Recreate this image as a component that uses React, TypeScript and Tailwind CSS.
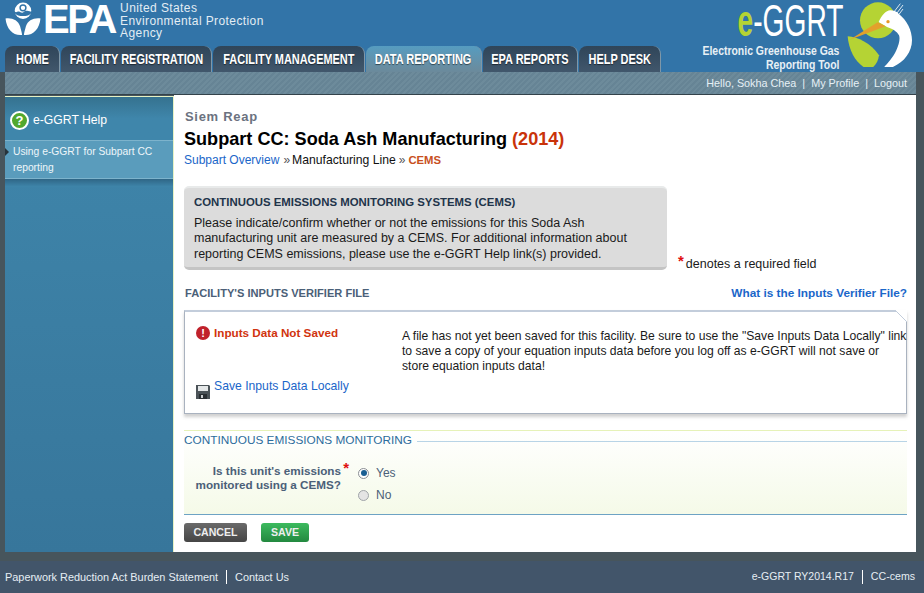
const tabs = [
  { label: "HOME", width: "w-[55px]" },
  { label: "FACILITY REGISTRATION", width: "w-[151px]" },
  { label: "FACILITY MANAGEMENT", width: "w-[152px]" },
  { label: "DATA REPORTING", width: "w-[116px]", active: true },
  { label: "EPA REPORTS", width: "w-[95px]" },
  { label: "HELP DESK", width: "w-[82px]" },
];

const EpaMark = () => (
  <svg width="36" height="34" viewBox="0 0 36 35" className="shrink-0">
    <circle cx="18" cy="9" r="8.5" fill="#fff" />
    <circle cx="18" cy="6" r="3" fill="none" stroke="#3274a8" strokeWidth="1.5" />
    <path d="M9.5 10c2 1.500 3-1 5 0s3 1.500 4.500 0 3-1 7.500 0v1.500c-3 4-14 4-17 0z" fill="#3274a8" />
    <path d="M0 17c7-1 13 2 15 8 1 4 2 7 2 9C8 35 1 28 0 17z" fill="#fff" />
    <path d="M36 17c-7-1-13 2-15 8-1 4-2 7-2 9 9 1 16-6 17-17z" fill="#fff" />
  </svg>
);

const HeronMark = () => (
  <svg width="65" height="65" viewBox="20 5 195 195" className="shrink-0">
    <circle cx="113" cy="60" r="54" fill="#b5d334" />
    <path d="M22 108c30 2 70 20 94 57-2 18-12 34-28 43-34-8-62-50-66-100z" fill="#b5d334" />
    <path d="M115 65c8-18 22-35 35-35 8 0 18 2 25 10 25 20 40 50 40 80 0 45-40 85-92 88 0 0 30-25 45-58 8-18 12-35 8-45-6-12-20-20-36-25z" fill="#fff" />
    <path d="M160 36l20-26M170 38l18-24M176 42l12-16" stroke="#fff" strokeWidth="2.500" />
    <path d="M28 118l84-52 24 12z" fill="#e3a02c" />
    <circle cx="143" cy="64" r="5" fill="#e89a25" />
  </svg>
);

const App = () => {
  return (
    <div className="w-[924px] h-[593px] overflow-hidden flex flex-col bg-[#47555c] font-['Liberation_Sans',Arial,sans-serif] text-[12px] text-[#1a1a1a]">
      {/* header */}
      <div className="h-[72px] shrink-0 bg-[#3274a8] flex justify-between pl-[5px] pr-[12px]">
        <div className="flex flex-col justify-between">
          <div className="flex items-start pt-[2px] text-white">
            <EpaMark />
            <span className="ml-[2px] -mt-[3px] text-[40px] leading-[40px] font-bold tracking-[-2.4px]">EPA</span>
            <div className="ml-[5px] text-[12px] leading-[12.5px] tracking-[0.4px] text-[#e3edf4]">
              <div>United States</div>
              <div>Environmental Protection</div>
              <div>Agency</div>
            </div>
          </div>
          <div className="flex h-[26px] gap-[1px]">
            {tabs.map((tab) => (
              <div
                key={tab.label}
                className={`${tab.width} h-full shrink-0 rounded-t-[8px] border-r border-[#7f97a8] flex items-center justify-center font-bold text-[15px] text-white [text-shadow:0_1px_1px_rgba(0,0,0,0.5)] ${
                  tab.active
                    ? "bg-gradient-to-b from-[#559cc0] to-[#6b8a9b]"
                    : "bg-gradient-to-b from-[#2f4559] to-[#41576c]"
                }`}
              >
                <span className="inline-block whitespace-nowrap scale-x-[0.73]">{tab.label}</span>
              </div>
            ))}
          </div>
        </div>
        <div className="flex items-start pt-[2px]">
          <div className="flex flex-col items-end text-[#e8f0f5] font-bold text-[12px] leading-[13.5px] mr-[4px]">
            <div className="text-[44px] leading-[38px] mb-[5px] font-normal whitespace-nowrap origin-right scale-x-[0.64] text-white">
              <span className="font-bold text-[#b5d334]">e</span>-GGRT
            </div>
            <div className="mr-[4px] whitespace-nowrap origin-right scale-x-[0.87]">Electronic Greenhouse Gas</div>
            <div className="mr-[4px] whitespace-nowrap origin-right scale-x-[0.87]">Reporting Tool</div>
          </div>
          <HeronMark />
        </div>
      </div>

      {/* user bar */}
      <div className="h-[23px] shrink-0 ml-[5px] mr-[8px] border-b border-[#33424a] flex items-center justify-end pr-[9px] gap-[6px] text-[10.8px] text-[#e6f0f5] bg-[repeating-linear-gradient(135deg,#6d8b9b_0px,#6d8b9b_2px,#668495_2px,#668495_4px)]">
        <span>Hello, Sokha Chea</span>
        <span>|</span>
        <span>My Profile</span>
        <span>|</span>
        <span>Logout</span>
      </div>

      {/* body */}
      <div className="h-[457px] shrink-0 ml-[5px] mr-[8px] flex">
        <div className="w-[169px] shrink-0 mt-[1px] border-t border-r border-[#e6f2c4] bg-gradient-to-b from-[#3f86ab] to-[#37769b] text-white">
          <div className="h-[43px] flex items-center pl-[5px] pt-[4px] gap-[4px] bg-gradient-to-b from-[#35728f] via-[#3f86ab] to-[#3f86ab] text-[12.2px]">
            <span className="w-[19px] h-[19px] rounded-full bg-[#52a82e] border-2 border-white flex items-center justify-center font-bold text-[13px] leading-none">?</span>
            <span>e-GGRT Help</span>
          </div>
          <div className="relative h-[39px] bg-[#5a9cbc] border-y border-[#7db3cc] pl-[8px] pt-[3px] text-[10.3px] leading-[15.5px] text-[#eef6fa]">
            <span className="absolute left-0 top-[7px] border-y-[4px] border-l-[4px] border-y-transparent border-l-[#26343c]" />
            Using e-GGRT for Subpart CC reporting
          </div>
          <div className="h-[8px] bg-gradient-to-b from-[#2f6686] to-[#3f86ab]" />
        </div>

        <div className="flex-1 bg-white pl-[10px] pr-[9px]">
          <div className="pt-[14px] pl-[1px] text-[13px] leading-[16px] font-bold text-[#6b7280] tracking-[0.7px]">Siem Reap</div>
          <h1 className="mt-[3px] text-[18.1px] leading-[22px] font-bold text-black">
            Subpart CC: Soda Ash Manufacturing <span className="text-[#c9330a]">(2014)</span>
          </h1>
          <div className="mt-[2px] h-[16px] flex items-center text-[12px]">
            <span className="text-[#1a66c9]">Subpart Overview</span>
            <span className="ml-[4px] text-[#555]">»</span>
            <span className="text-[#111] ml-[2px] text-[12.2px]">Manufacturing Line</span>
            <span className="mx-[3px] text-[#555]">»</span>
            <span className="font-bold text-[#c8501e] text-[11.3px]">CEMS</span>
          </div>

          <div className="flex items-end mt-[18px]">
            <div className="w-[483px] h-[84px] rounded-[5px] bg-[#dcdcdc] border-t-[2px] border-t-[#e8eaea] border-b-[3px] border-b-[#c4c4c4] px-[10px] pt-[7px] text-[12.5px] leading-[15.5px]">
              <div className="font-bold text-[#22344a] text-[11.4px] mb-[5px]">CONTINUOUS EMISSIONS MONITORING SYSTEMS (CEMS)</div>
              <div>Please indicate/confirm whether or not the emissions for this Soda Ash manufacturing unit are measured by a CEMS. For additional information about reporting CEMS emissions, please use the e-GGRT Help link(s) provided.</div>
            </div>
            <div className="ml-[11px] mb-[-1px] text-[12.5px] leading-[14px] flex items-end">
              <span className="font-bold text-[#e01010] text-[15px] mb-[3px] mr-[2px]">*</span>
              <span>denotes a required field</span>
            </div>
          </div>

          <div className="mt-[15px] flex justify-between items-center h-[16px] font-bold">
            <span className="ml-[1px] text-[#4b6078] text-[11.1px]">FACILITY'S INPUTS VERIFIER FILE</span>
            <span className="text-[#1a66c9] text-[11.8px] mt-[2px]">What is the Inputs Verifier File?</span>
          </div>

          <div className="relative mt-[9px] w-[723px] h-[104px] bg-white border border-[#a9b2bf] border-t-2 border-t-[#c3cddb] shadow-[0_3px_3px_rgba(120,120,120,0.35)] flex pl-[11px] pt-[13px]">
            <svg width="12" height="12" viewBox="0 0 12 12" className="absolute -right-px -top-[2px]">
              <path d="M0 0L12 12V0z" fill="#fff" />
              <path d="M0 0L12 12" stroke="#c3cddb" />
            </svg>
            <div className="w-[206px] shrink-0 flex flex-col">
              <div className="flex items-center gap-[4px] h-[16px]">
                <span className="w-[14px] h-[14px] rounded-full bg-[#c0212b] text-white font-bold flex items-center justify-center text-[11px] leading-none">!</span>
                <span className="font-bold text-[#d1340f] text-[11.7px]">Inputs Data Not Saved</span>
              </div>
              <div className="mt-[39px] flex items-start gap-[4px]">
                <svg width="14" height="14" viewBox="0 0 14 14" className="mt-[5px]">
                  <path d="M0 0h13l1 1v13H0z" fill="#4b5358" />
                  <path d="M2 1h10v5H2z" fill="#e4e7e8" />
                  <path d="M3 9h8v5H3z" fill="#2a2f33" />
                  <path d="M5 10h2v3H5z" fill="#c9cdd0" />
                </svg>
                <span className="text-[#1a66c9] text-[12.2px] -mt-[3px]">Save Inputs Data Locally</span>
              </div>
            </div>
            <div className="mt-[4px] w-[505px] text-[12.15px] leading-[15px] whitespace-nowrap">
              <div>A file has not yet been saved for this facility. Be sure to use the "Save Inputs Data Locally" link</div>
              <div>to save a copy of your equation inputs data before you log off as e-GGRT will not save or</div>
              <div>store equation inputs data!</div>
            </div>
          </div>

          <div className="mt-[16px] w-[723px] border-t border-t-[#e6f2b8] border-b border-b-[#6da3c4] bg-gradient-to-b from-white to-[#f5fae8] h-[85px]">
            <div className="h-[20px] flex items-center gap-[5px] text-[#2c6c9c] text-[11.8px]">
              <span>CONTINUOUS EMISSIONS MONITORING</span>
              <span className="flex-1 h-px bg-[#b8d4e6]" />
            </div>
            <div className="flex mt-[11px]">
              <div className="w-[157px] text-right font-bold text-[#4b6078] text-[11.7px] leading-[14px] pt-[2px]">
                <div className="relative">
                  Is this unit's emissions
                  <span className="absolute -right-[8px] -top-[3px] text-[#e01010] text-[15px]">*</span>
                </div>
                <div>monitored using a CEMS?</div>
              </div>
              <div className="ml-[17px] text-[#4b6078] leading-[22px]">
                <div className="flex items-center gap-[7px]">
                  <span className="w-[11px] h-[11px] rounded-full border border-[#8b8f94] bg-white flex items-center justify-center">
                    <span className="w-[6px] h-[6px] rounded-full bg-[#1a5f92]" />
                  </span>
                  <span>Yes</span>
                </div>
                <div className="flex items-center gap-[7px]">
                  <span className="w-[11px] h-[11px] rounded-full border border-[#a0a4a8] bg-[#e4e4e4]" />
                  <span>No</span>
                </div>
              </div>
            </div>
          </div>

          <div className="mt-[8px] flex gap-[14px]">
            <button className="w-[63px] h-[19px] rounded-[3px] bg-gradient-to-b from-[#6a6a6a] to-[#454545] text-[#eee] text-[10.6px] font-bold">CANCEL</button>
            <button className="w-[48px] h-[19px] rounded-[3px] bg-gradient-to-b from-[#3cba5e] to-[#23893f] text-[#eee] text-[10.6px] font-bold">SAVE</button>
          </div>
        </div>
      </div>

      {/* footer */}
      <div className="mt-[9px] h-[32px] shrink-0 bg-[#42556a] flex items-center justify-between pl-[5px] pr-[9px] text-[10.9px] text-[#e6eef4]">
        <div className="flex items-center">
          <span>Paperwork Reduction Act Burden Statement</span>
          <span className="w-px h-[14px] bg-white mx-[8px]" />
          <span>Contact Us</span>
        </div>
        <div className="flex items-center">
          <span className="text-[10.5px]">e-GGRT RY2014.R17</span>
          <span className="w-px h-[14px] bg-white mx-[8px]" />
          <span className="text-[10.6px]">CC-cems</span>
        </div>
      </div>
    </div>
  );
};

export default App;
